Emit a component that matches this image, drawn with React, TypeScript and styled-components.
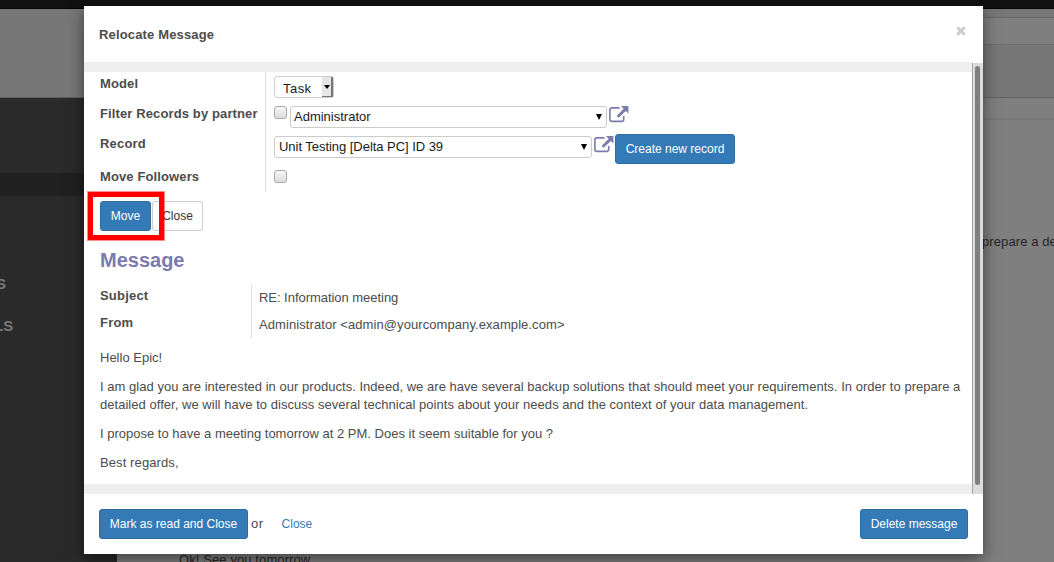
import React from "react";
import styled, { createGlobalStyle } from "styled-components";

const GlobalStyle = createGlobalStyle`
  * { box-sizing: border-box; }
  html, body { margin: 0; padding: 0; overflow: hidden; }
  body { font: 13px/18px "Liberation Sans", Arial, sans-serif; color: #4c4c4c; background: #7f7f7f; }
  p, h1, h2 { margin: 0; }
`;

const Page = styled.div`
  position: relative;
  width: 1054px;
  height: 562px;
  overflow: hidden;
  display: flex;
  flex-direction: column;
  background: #7f7f7f;
`;
const NavBar = styled.div`
  height: 9px;
  flex: none;
  background: #111;
  border-bottom: 1px solid #040404;
`;
const Columns = styled.div`
  display: flex;
  flex: 1;
`;
const Sidebar = styled.aside`
  width: 117px;
  display: flex;
  flex-direction: column;
  background: #2a2a2a;
`;
const Logo = styled.div`
  height: 89px;
  background: #777;
  border-bottom: 1px solid #5e5e5e;
`;
const ActiveItem = styled.div`
  height: 23px;
  margin-top: 75px;
  background: #202020;
`;
const MenuHeading = styled.div<{ $top: number; $shift: number }>`
  margin-top: ${(p) => p.$top}px;
  margin-left: ${(p) => p.$shift}px;
  height: 18px;
  font-size: 15px;
  font-weight: bold;
  color: #7a7a7a;
  white-space: nowrap;
`;
const Content = styled.main`
  flex: 1;
  display: flex;
  flex-direction: column;
`;
const Strip = styled.div<{ $h: number; $bg: string; $line: string; $lineH?: number }>`
  height: ${(p) => p.$h}px;
  background: ${(p) => p.$bg};
  border-bottom: ${(p) => p.$lineH ?? 1}px solid ${(p) => p.$line};
`;
const Thread = styled.div`
  display: flex;
  flex-direction: column;
  justify-content: space-between;
  padding: 113px 0 0 62px;
  height: 449px;
  flex: none;
  margin-bottom: -7px;
  color: #262626;
  white-space: nowrap;
`;
const ThreadEnd = styled.p<{ $ls?: number }>`
  align-self: flex-end;
  width: 72px;
  letter-spacing: ${(p) => p.$ls ?? 0}px;
`;
const ThreadReply = styled.p`
  letter-spacing: 0.1px;
`;

const Modal = styled.section`
  position: absolute;
  left: 84px;
  top: 6px;
  width: 899px;
  height: 548px;
  display: flex;
  flex-direction: column;
  background: #fff;
  box-shadow: 0 5px 15px rgba(0, 0, 0, 0.5);
`;
const ModalHeader = styled.header`
  height: 56px;
  display: flex;
  justify-content: space-between;
  align-items: center;
  padding: 0 17px 0 15px;
`;
const Title = styled.h1`
  margin-top: 2px;
  font-size: 13px;
  line-height: 18px;
  letter-spacing: 0.15px;
`;
const CloseIcon = styled.svg`
  width: 10px;
  height: 10px;
  margin-top: -6px;
  display: block;
`;
const Scroller = styled.div`
  height: 432px;
  display: flex;
`;
const Body = styled.div`
  flex: 1;
  border-top: 10px solid #efeeee;
  border-bottom: 10px solid #efeeee;
  padding-left: 16px;
`;
const Track = styled.div`
  width: 11px;
  margin-top: 1px;
  padding: 3px 3px 9px 2px;
  background: #dcdcdc;
  border-left: 1px solid #a5a8a8;
`;
const Thumb = styled.div`
  height: 419px;
  border-radius: 3px;
  background: #7c8080;
`;
const Form = styled.div`
  display: flex;
`;
const Labels = styled.div<{ $w: number }>`
  width: ${(p) => p.$w}px;
  border-right: 1px solid #ddd;
`;
const Fields = styled.div<{ $left?: number }>`
  padding-left: ${(p) => p.$left ?? 8}px;
`;
const LabelRow = styled.div<{ $h: number; $top?: number; $ls?: number }>`
  height: ${(p) => p.$h}px;
  padding-top: ${(p) => p.$top ?? 3}px;
  font-weight: bold;
  white-space: nowrap;
  letter-spacing: ${(p) => p.$ls ?? 0.12}px;
`;
const FieldRow = styled.div<{ $h: number; $top?: number }>`
  height: ${(p) => p.$h}px;
  padding-top: ${(p) => p.$top ?? 4}px;
  display: flex;
  align-items: flex-start;
`;
const ModelSelect = styled.div`
  width: 60px;
  height: 22px;
  display: flex;
  justify-content: space-between;
  padding-left: 8px;
  border: 1px solid #ccc;
  border-radius: 3px;
  color: #1a1a1a;
  line-height: 24px;
  letter-spacing: 0.45px;
`;
const ModelArrow = styled.span`
  width: 11px;
  height: 20px;
  display: flex;
  justify-content: center;
  padding-top: 8px;
  background: #e6e6e6;
  border-right: 2px solid #777;
  border-bottom: 1px solid #777;
`;
const RecordSelect = styled.div<{ $w: number; $ls?: number; $pad?: number }>`
  width: ${(p) => p.$w}px;
  height: 22px;
  display: flex;
  justify-content: space-between;
  align-items: center;
  padding: 0 4px 0 ${(p) => p.$pad ?? 4}px;
  border: 1px solid #ccc;
  border-radius: 3px;
  color: #1a1a1a;
  letter-spacing: ${(p) => p.$ls ?? 0}px;
`;
const Checkbox = styled.span`
  width: 13px;
  height: 13px;
  margin-right: 3px;
  border: 1px solid #aaa;
  border-radius: 3px;
  background: linear-gradient(#f6f6f6, #dcdcdc);
`;
const OpenSvg = styled.svg`
  width: 20px;
  height: 17px;
  margin: 0 1px 0 2px;
  flex: none;
`;
const Button = styled.button<{ $w: number; $plain?: boolean; $ls?: number }>`
  width: ${(p) => p.$w}px;
  height: 30px;
  padding: 0;
  border-radius: 3px;
  border: 1px solid ${(p) => (p.$plain ? "#ccc" : "#2e6da4")};
  background: ${(p) => (p.$plain ? "#fff" : "#337ab7")};
  color: ${(p) => (p.$plain ? "#333" : "#fff")};
  font: 12px/18px "Liberation Sans", Arial, sans-serif;
  letter-spacing: ${(p) => p.$ls ?? 0}px;
  white-space: nowrap;
`;
const Actions = styled.div`
  position: relative;
  display: flex;
  gap: 1px;
  padding-top: 9px;
`;
const Highlight = styled.div`
  position: absolute;
  left: -12px;
  top: 0;
  width: 76px;
  height: 48px;
  border: 5px solid #f00;
  outline: 1px solid rgba(255, 0, 0, 0.45);
  outline-offset: -0.5px;
`;
const Heading = styled.h2`
  padding-top: 17px;
  height: 54px;
  font-size: 20px;
  line-height: 24px;
  color: #7c7bad;
`;
const Value = styled.div<{ $h: number; $ls?: number }>`
  height: ${(p) => p.$h}px;
  padding-top: 4px;
  letter-spacing: ${(p) => p.$ls ?? 0}px;
`;
const Message = styled.div`
  display: flex;
  flex-direction: column;
  gap: 11px;
  padding-top: 11px;
  white-space: nowrap;
`;
const Line = styled.span<{ $ls?: number }>`
  display: block;
  letter-spacing: ${(p) => p.$ls ?? 0}px;
`;
const ModalFooter = styled.footer`
  height: 60px;
  display: flex;
  align-items: center;
  padding: 0 15px;
`;
const Or = styled.span`
  margin-left: 3px;
  letter-spacing: 0.5px;
`;
const Link = styled.a`
  margin-left: 18px;
  margin-right: auto;
  font-size: 12px;
  color: #337ab7;
`;

const Triangle = ({ w, h }: { w: number; h: number }) => (
  <svg width={w} height={h} viewBox="0 0 6 6" preserveAspectRatio="none">
    <path d="M0 0H6L3 6Z" fill="#000" />
  </svg>
);

const OpenIcon = () => (
  <OpenSvg viewBox="0 0 20 17">
    <path d="M10.5 1.9H3Q0.9 1.9 0.9 4V13.2Q0.9 15.4 3 15.4H12.6Q14.7 15.4 14.7 13.2V10" fill="none" stroke="#7c7bad" strokeWidth="1.6" />
    <path d="M12 0H19.4V7.4L16.8 4.9L9.6 11.8L7.6 9.9L14.7 2.7Z" fill="#7c7bad" />
  </OpenSvg>
);

export default function App() {
  return (
    <>
      <GlobalStyle />
      <Page>
        <NavBar />
        <Columns>
          <Sidebar>
            <Logo />
            <ActiveItem />
            <MenuHeading $top={79} $shift={-4}>S</MenuHeading>
            <MenuHeading $top={24} $shift={-6}>LS</MenuHeading>
          </Sidebar>
          <Content>
            <Strip $h={9} $bg="#777" $line="#696969" />
            <Strip $h={27} $bg="#7f7f7f" $line="#6e6e6e" />
            <Strip $h={53} $bg="#777" $line="#626262" />
            <Strip $h={22} $bg="#7f7f7f" $line="#787878" $lineH={2} />
            <Thread>
              <ThreadEnd $ls={0.1}>prepare a detailed</ThreadEnd>
              <ThreadReply>Ok! See you tomorrow.</ThreadReply>
            </Thread>
          </Content>
        </Columns>
        <Modal>
          <ModalHeader>
            <Title>Relocate Message</Title>
            <CloseIcon viewBox="0 0 10 10">
              <path d="M1.2 1.2L8.8 8.8M8.8 1.2L1.2 8.8" stroke="#ccc" strokeWidth="3" />
            </CloseIcon>
          </ModalHeader>
          <Scroller>
            <Body>
              <Form>
                <Labels $w={166}>
                  <LabelRow $h={30}>Model</LabelRow>
                  <LabelRow $h={30}>Filter Records by partner</LabelRow>
                  <LabelRow $h={33} $ls={0.2}>Record</LabelRow>
                  <LabelRow $h={27}>Move Followers</LabelRow>
                </Labels>
                <Fields>
                  <FieldRow $h={30}>
                    <ModelSelect>
                      Task
                      <ModelArrow><Triangle w={6} h={4} /></ModelArrow>
                    </ModelSelect>
                  </FieldRow>
                  <FieldRow $h={30}>
                    <Checkbox />
                    <RecordSelect $w={317} $pad={3}>Administrator<Triangle w={6} h={6} /></RecordSelect>
                    <OpenIcon />
                  </FieldRow>
                  <FieldRow $h={33} $top={2}>
                    <FieldRow $h={24} $top={2}>
                      <RecordSelect $w={318} $ls={-0.04}>Unit Testing [Delta PC] ID 39<Triangle w={6} h={6} /></RecordSelect>
                      <OpenIcon />
                    </FieldRow>
                    <Button $w={120}>Create new record</Button>
                  </FieldRow>
                  <FieldRow $h={27} $top={5}>
                    <Checkbox />
                  </FieldRow>
                </Fields>
              </Form>
              <Actions>
                <Button $w={51}>Move</Button>
                <Button $w={51} $plain>Close</Button>
                <Highlight />
              </Actions>
              <Heading>Message</Heading>
              <Form>
                <Labels $w={152}>
                  <LabelRow $h={27} $top={2} $ls={0.2}>Subject</LabelRow>
                  <LabelRow $h={26} $top={2} $ls={0.2}>From</LabelRow>
                </Labels>
                <Fields $left={7}>
                  <Value $h={27} $ls={-0.04}>RE: Information meeting</Value>
                  <Value $h={26} $ls={0.08}>Administrator &lt;admin@yourcompany.example.com&gt;</Value>
                </Fields>
              </Form>
              <Message>
                <p>Hello Epic!</p>
                <p>
                  <Line $ls={0.032}>I am glad you are interested in our products. Indeed, we are have several backup solutions that should meet your requirements. In order to prepare a</Line>
                  <Line $ls={0.036}>detailed offer, we will have to discuss several technical points about your needs and the context of your data management.</Line>
                </p>
                <p>I propose to have a meeting tomorrow at 2 PM. Does it seem suitable for you ?</p>
                <Line as="p" $ls={0.1}>Best regards,</Line>
              </Message>
            </Body>
            <Track><Thumb /></Track>
          </Scroller>
          <ModalFooter>
            <Button $w={149}>Mark as read and Close</Button>
            <Or>or</Or>
            <Link>Close</Link>
            <Button $w={108}>Delete message</Button>
          </ModalFooter>
        </Modal>
      </Page>
    </>
  );
}
